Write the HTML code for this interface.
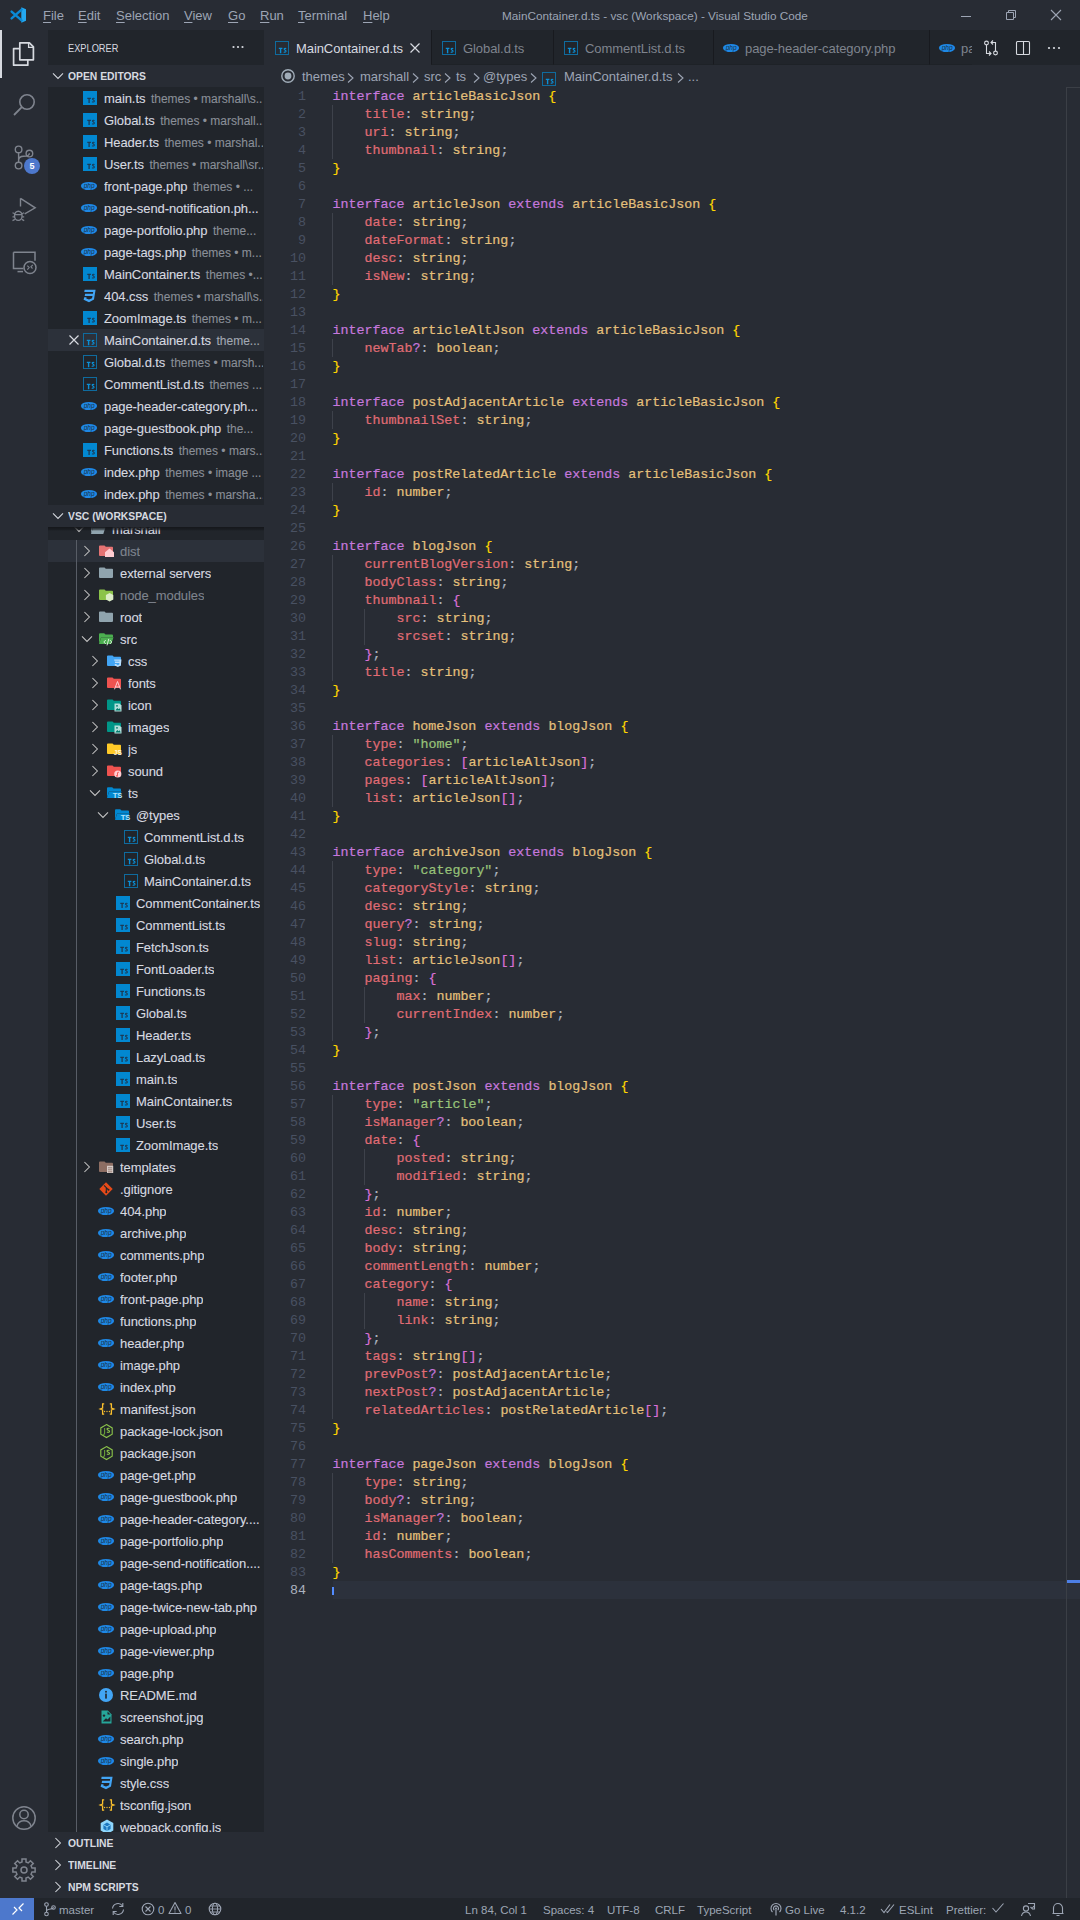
<!DOCTYPE html>
<html><head><meta charset="utf-8"><title>VS Code</title>
<style>
*{margin:0;padding:0;box-sizing:border-box}
html,body{width:1080px;height:1920px;overflow:hidden;background:#282c34}
body{position:relative;font-family:"Liberation Sans",sans-serif}
.t{position:absolute;white-space:nowrap;font-family:"Liberation Sans",sans-serif}
.ic{position:absolute;overflow:visible}
#titlebar{position:absolute;left:0;top:0;width:1080px;height:30px;background:#282c34}
.menu{font-size:13px;color:#9da5b4;line-height:16px}
.menu u{text-decoration:underline;text-underline-offset:2px}
.wtitle{font-size:11.75px;color:#9da5b4;line-height:14px}
#activity{position:absolute;left:0;top:30px;width:48px;height:1868px;background:#282c34}
#sidebar{position:absolute;left:48px;top:30px;width:216px;height:1868px;background:#21252b;overflow:hidden}
.sbtitle{font-size:11px;color:#d7dae0;line-height:13px;transform:scaleX(.84);transform-origin:0 0}
.hdr{position:absolute;left:0;width:216px;height:22px;background:#282c34}
.sechdr{font-size:11px;font-weight:bold;color:#d7dae0;line-height:13px;transform:scaleX(.94);transform-origin:0 0}
.item{font-size:13px;color:#d7dae0;line-height:16px;max-width:159px;overflow:hidden;letter-spacing:-.08px;-webkit-text-stroke:0.1px currentColor}
.item.dim{color:#7f848e}
.desc{font-size:12px;color:#8a8f98;margin-left:2px;letter-spacing:0}
.sel{position:absolute;left:0;width:216px;height:22px;background:#2c313a}
.sel2{position:absolute;left:0;width:216px;height:22px;background:#2c313a}
#tree{position:absolute;left:0;width:216px;overflow:hidden}
.sticky{position:absolute;left:0;width:216px;background:#21252b}
.shadowtop{position:absolute;left:0;top:0;width:216px;height:4px;background:linear-gradient(#15171b,rgba(21,23,27,.6) 60%,rgba(21,23,27,0))}
#editor{position:absolute;left:264px;top:30px;width:816px;height:1868px;background:#282c34;overflow:hidden}
#tabbar{position:absolute;left:0;top:0;width:816px;height:35px;background:#21252b}
.tab{position:absolute;top:0;height:35px;background:#21252b;border-left:1px solid #181a1f;border-bottom:1px solid #1e2227}
.tab.active{background:#282c34;border:none}
.tabt{font-size:13px;line-height:16px;letter-spacing:-.08px}
.bc{font-size:13px;color:#9da5b4;line-height:16px}
.bc .chev{font-size:16px}
.ln{position:absolute;left:0;margin-top:1px;width:42px;text-align:right;font-family:"Liberation Mono",monospace;font-size:13.33px;line-height:18px;color:#495162}
.ln.cur{color:#abb2bf}
.cl{position:absolute;left:68.4px;margin-top:1px;white-space:pre;font-family:"Liberation Mono",monospace;font-size:13.33px;line-height:18px;color:#abb2bf;-webkit-text-stroke:0.2px currentColor}
.guide{position:absolute;width:1px;background:#3e424b}
.k{color:#c678dd}.y{color:#e5c07b}.r{color:#e06c75}.p{color:#abb2bf}.g{color:#98c379}.b1{color:#ffd700}.b2{color:#da70d6}
#status{position:absolute;left:0;top:1898px;width:1080px;height:22px;background:#21252b}
.stt{font-size:11.5px;color:#9da5b4;line-height:14px}

.selrow .desc{color:#a3a9b3}

</style></head><body>
<div id="titlebar"><svg class="ic" style="left:10px;top:7px;width:16px;height:16px" viewBox="0 0 16 16"><path d="M11.3 0.3L16 2.2v11.6l-4.7 1.9z" fill="#24a8f0"/><path d="M1.6 4.6l10 8.8M1.6 11.4l10-8.8" stroke="#0a8ad6" stroke-width="2.4" stroke-linecap="round"/></svg><div class="t menu" style="left:43px;top:8px"><u>F</u>ile</div><div class="t menu" style="left:78px;top:8px"><u>E</u>dit</div><div class="t menu" style="left:116px;top:8px"><u>S</u>election</div><div class="t menu" style="left:184px;top:8px"><u>V</u>iew</div><div class="t menu" style="left:228px;top:8px"><u>G</u>o</div><div class="t menu" style="left:260px;top:8px"><u>R</u>un</div><div class="t menu" style="left:298px;top:8px"><u>T</u>erminal</div><div class="t menu" style="left:363px;top:8px"><u>H</u>elp</div><div class="t wtitle" style="left:502px;top:9px">MainContainer.d.ts - vsc (Workspace) - Visual Studio Code</div><svg class="ic" style="left:960px;top:10px;width:12px;height:12px" viewBox="0 0 12 12"><path d="M1 6.5h10" stroke="#9da5b4" stroke-width="1"/></svg><svg class="ic" style="left:1005px;top:9px;width:12px;height:12px" viewBox="0 0 12 12"><path d="M1.5 3.5h7v7h-7z M3.5 3.5v-2h7v7h-2" fill="none" stroke="#9da5b4" stroke-width="1"/></svg><svg class="ic" style="left:1050px;top:9px;width:12px;height:12px" viewBox="0 0 12 12"><path d="M1 1l10 10M11 1L1 11" stroke="#9da5b4" stroke-width="1.1"/></svg></div>
<div id="activity"><div style="position:absolute;left:0;top:0;width:2px;height:48px;background:#d7dae0"></div><svg class="ic" style="left:12px;top:12px;width:24px;height:24px" viewBox="0 0 24 24"><path d="M7.8 0.8h9.6l4 4v13H7.8z" fill="none" stroke="#d7dae0" stroke-width="1.7" stroke-linejoin="round"/><path d="M16.6 0.8v4.6h4.6" fill="none" stroke="#d7dae0" stroke-width="1.3"/><path d="M7.8 6.6H1.6v16.6h14.2v-5.4" fill="none" stroke="#d7dae0" stroke-width="1.7" stroke-linejoin="round"/></svg><svg class="ic" style="left:12px;top:63px;width:24px;height:24px" viewBox="0 0 24 24"><circle cx="15" cy="9" r="7.2" fill="none" stroke="#7f848e" stroke-width="1.6"/><path d="M9.8 14.2L2 22" stroke="#7f848e" stroke-width="1.8"/></svg><svg class="ic" style="left:12px;top:111px;width:24px;height:30px" viewBox="0 0 24 30"><circle cx="6.6" cy="8.4" r="3.3" fill="none" stroke="#7f848e" stroke-width="1.4"/><circle cx="17.4" cy="12.6" r="3.3" fill="none" stroke="#7f848e" stroke-width="1.4"/><circle cx="6.6" cy="24.6" r="3.3" fill="none" stroke="#7f848e" stroke-width="1.4"/><path d="M6.6 11.7v9.6M6.6 19.6c0-3 2-4.3 5-4.3 3 0 5.8-.4 5.8-3" fill="none" stroke="#7f848e" stroke-width="1.4"/></svg><div style="position:absolute;left:24px;top:128px;width:16px;height:16px;border-radius:8px;background:#4d78cc;color:#fff;font:bold 9px/16px 'Liberation Sans',sans-serif;text-align:center">5</div><svg class="ic" style="left:11px;top:166px;width:26px;height:26px" viewBox="0 0 26 26"><path d="M9.5 2.3v8.2M9.5 2.3L24.2 11.8l-10.5 6" fill="none" stroke="#7f848e" stroke-width="1.4"/><ellipse cx="7.3" cy="19.8" rx="3.8" ry="4.6" fill="none" stroke="#7f848e" stroke-width="1.4"/><path d="M1.5 16.7l2.4 1M1.5 20.8h2M1.5 24.6l2.4-1.2M13.2 16.7l-2.4 1M13.2 20.8h-2M13.2 24.6l-2.4-1.2M3.5 18.7h7.6" fill="none" stroke="#7f848e" stroke-width="1.2"/></svg><svg class="ic" style="left:12px;top:218px;width:26px;height:26px" viewBox="0 0 26 26"><path d="M1.5 4.2h21.5v8.5M11.5 20.5H1.5V4.2" fill="none" stroke="#7f848e" stroke-width="1.5"/><path d="M5.5 23.6h5.5" stroke="#7f848e" stroke-width="1.5"/><circle cx="18" cy="19.5" r="6" fill="none" stroke="#7f848e" stroke-width="1.5"/><path d="M15.3 17.6l1.9 1.9-1.9 2.1M20.8 16.9l-1.9 1.9 1.6 1.7" fill="none" stroke="#7f848e" stroke-width="1.1"/></svg><svg class="ic" style="left:12px;top:1776px;width:24px;height:24px" viewBox="0 0 24 24"><circle cx="12" cy="12" r="11.2" fill="none" stroke="#7f848e" stroke-width="1.5"/><circle cx="12" cy="8.5" r="4.2" fill="none" stroke="#7f848e" stroke-width="1.5"/><path d="M5 20c1-3.5 3.5-5.2 7-5.2s6 1.7 7 5.2" fill="none" stroke="#7f848e" stroke-width="1.5"/></svg><svg class="ic" style="left:12px;top:1828px;width:24px;height:24px" viewBox="0 0 24 24"><polygon points="10.00,4.05 10.00,0.88 14.00,0.88 14.00,4.05 16.21,4.96 18.45,2.72 21.28,5.55 19.04,7.79 19.95,10.00 23.12,10.00 23.12,14.00 19.95,14.00 19.04,16.21 21.28,18.45 18.45,21.28 16.21,19.04 14.00,19.95 14.00,23.12 10.00,23.12 10.00,19.95 7.79,19.04 5.55,21.28 2.72,18.45 4.96,16.21 4.05,14.00 0.88,14.00 0.88,10.00 4.05,10.00 4.96,7.79 2.72,5.55 5.55,2.72 7.79,4.96" fill="none" stroke="#7f848e" stroke-width="1.5" stroke-linejoin="miter"/><circle cx="12" cy="12" r="3" fill="none" stroke="#7f848e" stroke-width="1.5"/></svg></div>
<div id="sidebar"><div class="t sbtitle" style="left:20px;top:12px">EXPLORER</div><svg class="ic" style="left:182px;top:9px;width:16px;height:16px" viewBox="0 0 16 16"><circle cx="3.5" cy="8" r="1.1" fill="#d7dae0"/><circle cx="8" cy="8" r="1.1" fill="#d7dae0"/><circle cx="12.5" cy="8" r="1.1" fill="#d7dae0"/></svg><div class="hdr" style="top:35px"></div><svg class="ic" style="left:4px;top:42px;width:12px;height:8px" viewBox="0 0 12 8"><path d="M1 1.4l5 5 5-5" fill="none" stroke="#d7dae0" stroke-width="1.05"/></svg><div class="t sechdr" style="left:20px;top:40px">OPEN EDITORS</div><svg class="ic" style="left:35px;top:61px;width:14px;height:14px" viewBox="0 0 14 14"><rect x="0" y="0" width="14" height="14" fill="#0288d1"/><path d="M4.3 7.3h3.6M6.1 7.3v4.8" stroke="#1c3a55" stroke-width="1.3" fill="none"/><path d="M11.5 7.6c-.4-.4-1.6-.6-2 .1-.5.9 2.1 1.3 1.8 2.6-.3 1-1.7.9-2.2.4" stroke="#1c3a55" stroke-width="1.1" fill="none"/></svg><div class="t item" style="left:56px;top:61px">main.ts <span class="desc">themes • marshall\s...</span></div><svg class="ic" style="left:35px;top:83px;width:14px;height:14px" viewBox="0 0 14 14"><rect x="0" y="0" width="14" height="14" fill="#0288d1"/><path d="M4.3 7.3h3.6M6.1 7.3v4.8" stroke="#1c3a55" stroke-width="1.3" fill="none"/><path d="M11.5 7.6c-.4-.4-1.6-.6-2 .1-.5.9 2.1 1.3 1.8 2.6-.3 1-1.7.9-2.2.4" stroke="#1c3a55" stroke-width="1.1" fill="none"/></svg><div class="t item" style="left:56px;top:83px">Global.ts <span class="desc">themes • marshall...</span></div><svg class="ic" style="left:35px;top:105px;width:14px;height:14px" viewBox="0 0 14 14"><rect x="0" y="0" width="14" height="14" fill="#0288d1"/><path d="M4.3 7.3h3.6M6.1 7.3v4.8" stroke="#1c3a55" stroke-width="1.3" fill="none"/><path d="M11.5 7.6c-.4-.4-1.6-.6-2 .1-.5.9 2.1 1.3 1.8 2.6-.3 1-1.7.9-2.2.4" stroke="#1c3a55" stroke-width="1.1" fill="none"/></svg><div class="t item" style="left:56px;top:105px">Header.ts <span class="desc">themes • marshal...</span></div><svg class="ic" style="left:35px;top:127px;width:14px;height:14px" viewBox="0 0 14 14"><rect x="0" y="0" width="14" height="14" fill="#0288d1"/><path d="M4.3 7.3h3.6M6.1 7.3v4.8" stroke="#1c3a55" stroke-width="1.3" fill="none"/><path d="M11.5 7.6c-.4-.4-1.6-.6-2 .1-.5.9 2.1 1.3 1.8 2.6-.3 1-1.7.9-2.2.4" stroke="#1c3a55" stroke-width="1.1" fill="none"/></svg><div class="t item" style="left:56px;top:127px">User.ts <span class="desc">themes • marshall\sr...</span></div><svg class="ic" style="left:33px;top:151px;width:16px;height:10px" viewBox="0 0 16 10"><ellipse cx="8" cy="5" rx="8.1" ry="4.1" fill="#1e88e5"/><text x="8.2" y="7" font-family="Liberation Sans" font-style="italic" font-size="6.6" fill="#1a2f45" text-anchor="middle">php</text></svg><div class="t item" style="left:56px;top:149px">front-page.php <span class="desc">themes • ...</span></div><svg class="ic" style="left:33px;top:173px;width:16px;height:10px" viewBox="0 0 16 10"><ellipse cx="8" cy="5" rx="8.1" ry="4.1" fill="#1e88e5"/><text x="8.2" y="7" font-family="Liberation Sans" font-style="italic" font-size="6.6" fill="#1a2f45" text-anchor="middle">php</text></svg><div class="t item" style="left:56px;top:171px">page-send-notification.ph...</div><svg class="ic" style="left:33px;top:195px;width:16px;height:10px" viewBox="0 0 16 10"><ellipse cx="8" cy="5" rx="8.1" ry="4.1" fill="#1e88e5"/><text x="8.2" y="7" font-family="Liberation Sans" font-style="italic" font-size="6.6" fill="#1a2f45" text-anchor="middle">php</text></svg><div class="t item" style="left:56px;top:193px">page-portfolio.php <span class="desc">theme...</span></div><svg class="ic" style="left:33px;top:217px;width:16px;height:10px" viewBox="0 0 16 10"><ellipse cx="8" cy="5" rx="8.1" ry="4.1" fill="#1e88e5"/><text x="8.2" y="7" font-family="Liberation Sans" font-style="italic" font-size="6.6" fill="#1a2f45" text-anchor="middle">php</text></svg><div class="t item" style="left:56px;top:215px">page-tags.php <span class="desc">themes • m...</span></div><svg class="ic" style="left:35px;top:237px;width:14px;height:14px" viewBox="0 0 14 14"><rect x="0" y="0" width="14" height="14" fill="#0288d1"/><path d="M4.3 7.3h3.6M6.1 7.3v4.8" stroke="#1c3a55" stroke-width="1.3" fill="none"/><path d="M11.5 7.6c-.4-.4-1.6-.6-2 .1-.5.9 2.1 1.3 1.8 2.6-.3 1-1.7.9-2.2.4" stroke="#1c3a55" stroke-width="1.1" fill="none"/></svg><div class="t item" style="left:56px;top:237px">MainContainer.ts <span class="desc">themes •...</span></div><svg class="ic" style="left:34px;top:259px;width:14px;height:14px" viewBox="0 0 14 14"><path d="M2.6 0.8h11l-1.6 9.8L7 13.2 1.6 10.7 2.2 8.2h2.3l-.2 1.2L7 10.6l3-1.3.5-2.4H2.7l.4-2.2h7.8l.3-1.7H2.3z" fill="#42a5f5"/></svg><div class="t item" style="left:56px;top:259px">404.css <span class="desc">themes • marshall\s...</span></div><svg class="ic" style="left:35px;top:281px;width:14px;height:14px" viewBox="0 0 14 14"><rect x="0" y="0" width="14" height="14" fill="#0288d1"/><path d="M4.3 7.3h3.6M6.1 7.3v4.8" stroke="#1c3a55" stroke-width="1.3" fill="none"/><path d="M11.5 7.6c-.4-.4-1.6-.6-2 .1-.5.9 2.1 1.3 1.8 2.6-.3 1-1.7.9-2.2.4" stroke="#1c3a55" stroke-width="1.1" fill="none"/></svg><div class="t item" style="left:56px;top:281px">ZoomImage.ts <span class="desc">themes • m...</span></div><div class="sel" style="top:299px"></div><svg class="ic" style="left:21px;top:305px;width:10px;height:10px" viewBox="0 0 10 10"><path d="M0.5 0.5l9 9M9.5 0.5l-9 9" stroke="#d7dae0" stroke-width="1.2"/></svg><svg class="ic" style="left:35px;top:303px;width:14px;height:14px" viewBox="0 0 14 14"><rect x="0.5" y="0.5" width="13" height="13" fill="none" stroke="#0f6b9e" stroke-width="1"/><path d="M3.8 7.4h3.6M5.6 7.4v4.8" stroke="#0b8fd6" stroke-width="1.4" fill="none"/><path d="M11.2 7.7c-.4-.4-1.6-.6-2 .1-.5.9 2.1 1.3 1.8 2.6-.3 1-1.7.9-2.2.4" stroke="#0b8fd6" stroke-width="1.2" fill="none"/></svg><div class="t item selrow" style="left:56px;top:303px">MainContainer.d.ts <span class="desc">theme...</span></div><svg class="ic" style="left:35px;top:325px;width:14px;height:14px" viewBox="0 0 14 14"><rect x="0.5" y="0.5" width="13" height="13" fill="none" stroke="#0f6b9e" stroke-width="1"/><path d="M3.8 7.4h3.6M5.6 7.4v4.8" stroke="#0b8fd6" stroke-width="1.4" fill="none"/><path d="M11.2 7.7c-.4-.4-1.6-.6-2 .1-.5.9 2.1 1.3 1.8 2.6-.3 1-1.7.9-2.2.4" stroke="#0b8fd6" stroke-width="1.2" fill="none"/></svg><div class="t item" style="left:56px;top:325px">Global.d.ts <span class="desc">themes • marsh...</span></div><svg class="ic" style="left:35px;top:347px;width:14px;height:14px" viewBox="0 0 14 14"><rect x="0.5" y="0.5" width="13" height="13" fill="none" stroke="#0f6b9e" stroke-width="1"/><path d="M3.8 7.4h3.6M5.6 7.4v4.8" stroke="#0b8fd6" stroke-width="1.4" fill="none"/><path d="M11.2 7.7c-.4-.4-1.6-.6-2 .1-.5.9 2.1 1.3 1.8 2.6-.3 1-1.7.9-2.2.4" stroke="#0b8fd6" stroke-width="1.2" fill="none"/></svg><div class="t item" style="left:56px;top:347px">CommentList.d.ts <span class="desc">themes ...</span></div><svg class="ic" style="left:33px;top:371px;width:16px;height:10px" viewBox="0 0 16 10"><ellipse cx="8" cy="5" rx="8.1" ry="4.1" fill="#1e88e5"/><text x="8.2" y="7" font-family="Liberation Sans" font-style="italic" font-size="6.6" fill="#1a2f45" text-anchor="middle">php</text></svg><div class="t item" style="left:56px;top:369px">page-header-category.ph...</div><svg class="ic" style="left:33px;top:393px;width:16px;height:10px" viewBox="0 0 16 10"><ellipse cx="8" cy="5" rx="8.1" ry="4.1" fill="#1e88e5"/><text x="8.2" y="7" font-family="Liberation Sans" font-style="italic" font-size="6.6" fill="#1a2f45" text-anchor="middle">php</text></svg><div class="t item" style="left:56px;top:391px">page-guestbook.php <span class="desc">the...</span></div><svg class="ic" style="left:35px;top:413px;width:14px;height:14px" viewBox="0 0 14 14"><rect x="0" y="0" width="14" height="14" fill="#0288d1"/><path d="M4.3 7.3h3.6M6.1 7.3v4.8" stroke="#1c3a55" stroke-width="1.3" fill="none"/><path d="M11.5 7.6c-.4-.4-1.6-.6-2 .1-.5.9 2.1 1.3 1.8 2.6-.3 1-1.7.9-2.2.4" stroke="#1c3a55" stroke-width="1.1" fill="none"/></svg><div class="t item" style="left:56px;top:413px">Functions.ts <span class="desc">themes • mars...</span></div><svg class="ic" style="left:33px;top:437px;width:16px;height:10px" viewBox="0 0 16 10"><ellipse cx="8" cy="5" rx="8.1" ry="4.1" fill="#1e88e5"/><text x="8.2" y="7" font-family="Liberation Sans" font-style="italic" font-size="6.6" fill="#1a2f45" text-anchor="middle">php</text></svg><div class="t item" style="left:56px;top:435px">index.php <span class="desc">themes • image ...</span></div><svg class="ic" style="left:33px;top:459px;width:16px;height:10px" viewBox="0 0 16 10"><ellipse cx="8" cy="5" rx="8.1" ry="4.1" fill="#1e88e5"/><text x="8.2" y="7" font-family="Liberation Sans" font-style="italic" font-size="6.6" fill="#1a2f45" text-anchor="middle">php</text></svg><div class="t item" style="left:56px;top:457px">index.php <span class="desc">themes • marsha...</span></div><div id="tree" style="top:497px;height:1305px"><div class="sel2" style="top:13px"></div><svg class="ic" style="left:35px;top:18px;width:8px;height:12px" viewBox="0 0 8 12"><path d="M1.4 1l5 5-5 5" fill="none" stroke="#c5c5c5" stroke-width="1.05"/></svg><svg class="ic" style="left:51px;top:18px;width:16px;height:14px" viewBox="0 0 16 14"><path d="M0 1.3C0 .8.4.4.9.4h4.6l1.3 1.3h6.3c.5 0 .9.4.9.9v7.5c0 .5-.4.9-.9.9H.9c-.5 0-.9-.4-.9-.9z" fill="#e57373"/><path d="M6 7.2l4.5-3.8L15 7.2V12H6z" fill="#ffcdd2"/></svg><div class="t item dim" style="left:72px;top:17px">dist</div><svg class="ic" style="left:35px;top:40px;width:8px;height:12px" viewBox="0 0 8 12"><path d="M1.4 1l5 5-5 5" fill="none" stroke="#c5c5c5" stroke-width="1.05"/></svg><svg class="ic" style="left:51px;top:40px;width:16px;height:14px" viewBox="0 0 16 14"><path d="M0 1.3C0 .8.4.4.9.4h4.6l1.3 1.3h6.3c.5 0 .9.4.9.9v7.5c0 .5-.4.9-.9.9H.9c-.5 0-.9-.4-.9-.9z" fill="#90a4ae"/></svg><div class="t item" style="left:72px;top:39px">external servers</div><svg class="ic" style="left:35px;top:62px;width:8px;height:12px" viewBox="0 0 8 12"><path d="M1.4 1l5 5-5 5" fill="none" stroke="#c5c5c5" stroke-width="1.05"/></svg><svg class="ic" style="left:51px;top:62px;width:16px;height:14px" viewBox="0 0 16 14"><path d="M0 1.3C0 .8.4.4.9.4h4.6l1.3 1.3h6.3c.5 0 .9.4.9.9v7.5c0 .5-.4.9-.9.9H.9c-.5 0-.9-.4-.9-.9z" fill="#8bc34a"/><path d="M10.6 4l3.7 2.1v4.4l-3.7 2.1-3.7-2.1V6.1z" fill="#dcedc8"/></svg><div class="t item dim" style="left:72px;top:61px">node_modules</div><svg class="ic" style="left:35px;top:84px;width:8px;height:12px" viewBox="0 0 8 12"><path d="M1.4 1l5 5-5 5" fill="none" stroke="#c5c5c5" stroke-width="1.05"/></svg><svg class="ic" style="left:51px;top:84px;width:16px;height:14px" viewBox="0 0 16 14"><path d="M0 1.3C0 .8.4.4.9.4h4.6l1.3 1.3h6.3c.5 0 .9.4.9.9v7.5c0 .5-.4.9-.9.9H.9c-.5 0-.9-.4-.9-.9z" fill="#90a4ae"/></svg><div class="t item" style="left:72px;top:83px">root</div><svg class="ic" style="left:33px;top:108px;width:12px;height:8px" viewBox="0 0 12 8"><path d="M1 1.4l5 5 5-5" fill="none" stroke="#c5c5c5" stroke-width="1.05"/></svg><svg class="ic" style="left:51px;top:106px;width:16px;height:14px" viewBox="0 0 16 14"><path d="M0 1.2C0 .7.4.3.9.3h4.3l1.3 1.3h6.6c.5 0 .9.4.9.9V4H2.2L0 10.8z" fill="#4caf50"/><path d="M2.2 4.3H14.5L12.3 11H0z" fill="#4caf50"/><path d="M6.8 7l-2 2 2 2M10.8 7l2 2-2 2M9.8 5.8l-1.8 6.6" stroke="#e8f5e9" stroke-width="0.9" fill="none"/></svg><div class="t item" style="left:72px;top:105px">src</div><svg class="ic" style="left:43px;top:128px;width:8px;height:12px" viewBox="0 0 8 12"><path d="M1.4 1l5 5-5 5" fill="none" stroke="#c5c5c5" stroke-width="1.05"/></svg><svg class="ic" style="left:59px;top:128px;width:16px;height:14px" viewBox="0 0 16 14"><path d="M0 1.3C0 .8.4.4.9.4h4.6l1.3 1.3h6.3c.5 0 .9.4.9.9v7.5c0 .5-.4.9-.9.9H.9c-.5 0-.9-.4-.9-.9z" fill="#42a5f5"/><path d="M7.2 4.6h7.3l-.7 6-3 1.4-3-1.4-.1-1.6h1.8v.6l1.3.6 1.4-.6.2-1.6H8l-.2-1.5h4.6l.1-.8H7.3z" fill="#bbdefb"/></svg><div class="t item" style="left:80px;top:127px">css</div><svg class="ic" style="left:43px;top:150px;width:8px;height:12px" viewBox="0 0 8 12"><path d="M1.4 1l5 5-5 5" fill="none" stroke="#c5c5c5" stroke-width="1.05"/></svg><svg class="ic" style="left:59px;top:150px;width:16px;height:14px" viewBox="0 0 16 14"><path d="M0 1.3C0 .8.4.4.9.4h4.6l1.3 1.3h6.3c.5 0 .9.4.9.9v7.5c0 .5-.4.9-.9.9H.9c-.5 0-.9-.4-.9-.9z" fill="#ef5350"/><path d="M7.5 12.3l3-7.8 3 7.8M8.6 10h3.8" stroke="#ffcdd2" stroke-width="1" fill="none"/></svg><div class="t item" style="left:80px;top:149px">fonts</div><svg class="ic" style="left:43px;top:172px;width:8px;height:12px" viewBox="0 0 8 12"><path d="M1.4 1l5 5-5 5" fill="none" stroke="#c5c5c5" stroke-width="1.05"/></svg><svg class="ic" style="left:59px;top:172px;width:16px;height:14px" viewBox="0 0 16 14"><path d="M0 1.3C0 .8.4.4.9.4h4.6l1.3 1.3h6.3c.5 0 .9.4.9.9v7.5c0 .5-.4.9-.9.9H.9c-.5 0-.9-.4-.9-.9z" fill="#009688"/><path d="M7.5 4.5h5l2 2v6h-7z" fill="#b2dfdb"/><path d="M8.3 11.5l2-2.5 1.3 1.3 1-1 1.2 2.2z" fill="#00796b"/><circle cx="10" cy="6.8" r=".9" fill="#00796b"/></svg><div class="t item" style="left:80px;top:171px">icon</div><svg class="ic" style="left:43px;top:194px;width:8px;height:12px" viewBox="0 0 8 12"><path d="M1.4 1l5 5-5 5" fill="none" stroke="#c5c5c5" stroke-width="1.05"/></svg><svg class="ic" style="left:59px;top:194px;width:16px;height:14px" viewBox="0 0 16 14"><path d="M0 1.3C0 .8.4.4.9.4h4.6l1.3 1.3h6.3c.5 0 .9.4.9.9v7.5c0 .5-.4.9-.9.9H.9c-.5 0-.9-.4-.9-.9z" fill="#009688"/><path d="M7.5 4.5h5l2 2v6h-7z" fill="#b2dfdb"/><path d="M8.3 11.5l2-2.5 1.3 1.3 1-1 1.2 2.2z" fill="#00796b"/><circle cx="10" cy="6.8" r=".9" fill="#00796b"/></svg><div class="t item" style="left:80px;top:193px">images</div><svg class="ic" style="left:43px;top:216px;width:8px;height:12px" viewBox="0 0 8 12"><path d="M1.4 1l5 5-5 5" fill="none" stroke="#c5c5c5" stroke-width="1.05"/></svg><svg class="ic" style="left:59px;top:216px;width:16px;height:14px" viewBox="0 0 16 14"><path d="M0 1.3C0 .8.4.4.9.4h4.6l1.3 1.3h6.3c.5 0 .9.4.9.9v7.5c0 .5-.4.9-.9.9H.9c-.5 0-.9-.4-.9-.9z" fill="#ffca28"/><text x="10.8" y="12.2" font-family="Liberation Sans" font-size="6.5" font-weight="bold" fill="#fff8e1" text-anchor="middle">JS</text></svg><div class="t item" style="left:80px;top:215px">js</div><svg class="ic" style="left:43px;top:238px;width:8px;height:12px" viewBox="0 0 8 12"><path d="M1.4 1l5 5-5 5" fill="none" stroke="#c5c5c5" stroke-width="1.05"/></svg><svg class="ic" style="left:59px;top:238px;width:16px;height:14px" viewBox="0 0 16 14"><path d="M0 1.3C0 .8.4.4.9.4h4.6l1.3 1.3h6.3c.5 0 .9.4.9.9v7.5c0 .5-.4.9-.9.9H.9c-.5 0-.9-.4-.9-.9z" fill="#ef5350"/><circle cx="10.8" cy="9" r="3.6" fill="#ffcdd2"/><path d="M10.5 10.8V7.6l1.4-.4" stroke="#ef5350" stroke-width="0.9" fill="none"/><circle cx="10" cy="10.8" r=".9" fill="#ef5350"/></svg><div class="t item" style="left:80px;top:237px">sound</div><svg class="ic" style="left:41px;top:262px;width:12px;height:8px" viewBox="0 0 12 8"><path d="M1 1.4l5 5 5-5" fill="none" stroke="#c5c5c5" stroke-width="1.05"/></svg><svg class="ic" style="left:59px;top:260px;width:16px;height:14px" viewBox="0 0 16 14"><path d="M0 1.2C0 .7.4.3.9.3h4.3l1.3 1.3h6.6c.5 0 .9.4.9.9V4H2.2L0 10.8z" fill="#0288d1"/><path d="M2.2 4.3H14.5L12.3 11H0z" fill="#0288d1"/><text x="10.6" y="11.2" font-family="Liberation Sans" font-size="7.6" font-weight="bold" fill="#b3e5fc" text-anchor="middle">TS</text></svg><div class="t item" style="left:80px;top:259px">ts</div><svg class="ic" style="left:49px;top:284px;width:12px;height:8px" viewBox="0 0 12 8"><path d="M1 1.4l5 5 5-5" fill="none" stroke="#c5c5c5" stroke-width="1.05"/></svg><svg class="ic" style="left:67px;top:282px;width:16px;height:14px" viewBox="0 0 16 14"><path d="M0 1.2C0 .7.4.3.9.3h4.3l1.3 1.3h6.6c.5 0 .9.4.9.9V4H2.2L0 10.8z" fill="#0288d1"/><path d="M2.2 4.3H14.5L12.3 11H0z" fill="#0288d1"/><text x="10.6" y="11.2" font-family="Liberation Sans" font-size="7.6" font-weight="bold" fill="#b3e5fc" text-anchor="middle">TS</text></svg><div class="t item" style="left:88px;top:281px">@types</div><svg class="ic" style="left:76px;top:303px;width:14px;height:14px" viewBox="0 0 14 14"><rect x="0.5" y="0.5" width="13" height="13" fill="none" stroke="#0f6b9e" stroke-width="1"/><path d="M3.8 7.4h3.6M5.6 7.4v4.8" stroke="#0b8fd6" stroke-width="1.4" fill="none"/><path d="M11.2 7.7c-.4-.4-1.6-.6-2 .1-.5.9 2.1 1.3 1.8 2.6-.3 1-1.7.9-2.2.4" stroke="#0b8fd6" stroke-width="1.2" fill="none"/></svg><div class="t item" style="left:96px;top:303px">CommentList.d.ts</div><svg class="ic" style="left:76px;top:325px;width:14px;height:14px" viewBox="0 0 14 14"><rect x="0.5" y="0.5" width="13" height="13" fill="none" stroke="#0f6b9e" stroke-width="1"/><path d="M3.8 7.4h3.6M5.6 7.4v4.8" stroke="#0b8fd6" stroke-width="1.4" fill="none"/><path d="M11.2 7.7c-.4-.4-1.6-.6-2 .1-.5.9 2.1 1.3 1.8 2.6-.3 1-1.7.9-2.2.4" stroke="#0b8fd6" stroke-width="1.2" fill="none"/></svg><div class="t item" style="left:96px;top:325px">Global.d.ts</div><svg class="ic" style="left:76px;top:347px;width:14px;height:14px" viewBox="0 0 14 14"><rect x="0.5" y="0.5" width="13" height="13" fill="none" stroke="#0f6b9e" stroke-width="1"/><path d="M3.8 7.4h3.6M5.6 7.4v4.8" stroke="#0b8fd6" stroke-width="1.4" fill="none"/><path d="M11.2 7.7c-.4-.4-1.6-.6-2 .1-.5.9 2.1 1.3 1.8 2.6-.3 1-1.7.9-2.2.4" stroke="#0b8fd6" stroke-width="1.2" fill="none"/></svg><div class="t item" style="left:96px;top:347px">MainContainer.d.ts</div><svg class="ic" style="left:68px;top:369px;width:14px;height:14px" viewBox="0 0 14 14"><rect x="0" y="0" width="14" height="14" fill="#0288d1"/><path d="M4.3 7.3h3.6M6.1 7.3v4.8" stroke="#1c3a55" stroke-width="1.3" fill="none"/><path d="M11.5 7.6c-.4-.4-1.6-.6-2 .1-.5.9 2.1 1.3 1.8 2.6-.3 1-1.7.9-2.2.4" stroke="#1c3a55" stroke-width="1.1" fill="none"/></svg><div class="t item" style="left:88px;top:369px">CommentContainer.ts</div><svg class="ic" style="left:68px;top:391px;width:14px;height:14px" viewBox="0 0 14 14"><rect x="0" y="0" width="14" height="14" fill="#0288d1"/><path d="M4.3 7.3h3.6M6.1 7.3v4.8" stroke="#1c3a55" stroke-width="1.3" fill="none"/><path d="M11.5 7.6c-.4-.4-1.6-.6-2 .1-.5.9 2.1 1.3 1.8 2.6-.3 1-1.7.9-2.2.4" stroke="#1c3a55" stroke-width="1.1" fill="none"/></svg><div class="t item" style="left:88px;top:391px">CommentList.ts</div><svg class="ic" style="left:68px;top:413px;width:14px;height:14px" viewBox="0 0 14 14"><rect x="0" y="0" width="14" height="14" fill="#0288d1"/><path d="M4.3 7.3h3.6M6.1 7.3v4.8" stroke="#1c3a55" stroke-width="1.3" fill="none"/><path d="M11.5 7.6c-.4-.4-1.6-.6-2 .1-.5.9 2.1 1.3 1.8 2.6-.3 1-1.7.9-2.2.4" stroke="#1c3a55" stroke-width="1.1" fill="none"/></svg><div class="t item" style="left:88px;top:413px">FetchJson.ts</div><svg class="ic" style="left:68px;top:435px;width:14px;height:14px" viewBox="0 0 14 14"><rect x="0" y="0" width="14" height="14" fill="#0288d1"/><path d="M4.3 7.3h3.6M6.1 7.3v4.8" stroke="#1c3a55" stroke-width="1.3" fill="none"/><path d="M11.5 7.6c-.4-.4-1.6-.6-2 .1-.5.9 2.1 1.3 1.8 2.6-.3 1-1.7.9-2.2.4" stroke="#1c3a55" stroke-width="1.1" fill="none"/></svg><div class="t item" style="left:88px;top:435px">FontLoader.ts</div><svg class="ic" style="left:68px;top:457px;width:14px;height:14px" viewBox="0 0 14 14"><rect x="0" y="0" width="14" height="14" fill="#0288d1"/><path d="M4.3 7.3h3.6M6.1 7.3v4.8" stroke="#1c3a55" stroke-width="1.3" fill="none"/><path d="M11.5 7.6c-.4-.4-1.6-.6-2 .1-.5.9 2.1 1.3 1.8 2.6-.3 1-1.7.9-2.2.4" stroke="#1c3a55" stroke-width="1.1" fill="none"/></svg><div class="t item" style="left:88px;top:457px">Functions.ts</div><svg class="ic" style="left:68px;top:479px;width:14px;height:14px" viewBox="0 0 14 14"><rect x="0" y="0" width="14" height="14" fill="#0288d1"/><path d="M4.3 7.3h3.6M6.1 7.3v4.8" stroke="#1c3a55" stroke-width="1.3" fill="none"/><path d="M11.5 7.6c-.4-.4-1.6-.6-2 .1-.5.9 2.1 1.3 1.8 2.6-.3 1-1.7.9-2.2.4" stroke="#1c3a55" stroke-width="1.1" fill="none"/></svg><div class="t item" style="left:88px;top:479px">Global.ts</div><svg class="ic" style="left:68px;top:501px;width:14px;height:14px" viewBox="0 0 14 14"><rect x="0" y="0" width="14" height="14" fill="#0288d1"/><path d="M4.3 7.3h3.6M6.1 7.3v4.8" stroke="#1c3a55" stroke-width="1.3" fill="none"/><path d="M11.5 7.6c-.4-.4-1.6-.6-2 .1-.5.9 2.1 1.3 1.8 2.6-.3 1-1.7.9-2.2.4" stroke="#1c3a55" stroke-width="1.1" fill="none"/></svg><div class="t item" style="left:88px;top:501px">Header.ts</div><svg class="ic" style="left:68px;top:523px;width:14px;height:14px" viewBox="0 0 14 14"><rect x="0" y="0" width="14" height="14" fill="#0288d1"/><path d="M4.3 7.3h3.6M6.1 7.3v4.8" stroke="#1c3a55" stroke-width="1.3" fill="none"/><path d="M11.5 7.6c-.4-.4-1.6-.6-2 .1-.5.9 2.1 1.3 1.8 2.6-.3 1-1.7.9-2.2.4" stroke="#1c3a55" stroke-width="1.1" fill="none"/></svg><div class="t item" style="left:88px;top:523px">LazyLoad.ts</div><svg class="ic" style="left:68px;top:545px;width:14px;height:14px" viewBox="0 0 14 14"><rect x="0" y="0" width="14" height="14" fill="#0288d1"/><path d="M4.3 7.3h3.6M6.1 7.3v4.8" stroke="#1c3a55" stroke-width="1.3" fill="none"/><path d="M11.5 7.6c-.4-.4-1.6-.6-2 .1-.5.9 2.1 1.3 1.8 2.6-.3 1-1.7.9-2.2.4" stroke="#1c3a55" stroke-width="1.1" fill="none"/></svg><div class="t item" style="left:88px;top:545px">main.ts</div><svg class="ic" style="left:68px;top:567px;width:14px;height:14px" viewBox="0 0 14 14"><rect x="0" y="0" width="14" height="14" fill="#0288d1"/><path d="M4.3 7.3h3.6M6.1 7.3v4.8" stroke="#1c3a55" stroke-width="1.3" fill="none"/><path d="M11.5 7.6c-.4-.4-1.6-.6-2 .1-.5.9 2.1 1.3 1.8 2.6-.3 1-1.7.9-2.2.4" stroke="#1c3a55" stroke-width="1.1" fill="none"/></svg><div class="t item" style="left:88px;top:567px">MainContainer.ts</div><svg class="ic" style="left:68px;top:589px;width:14px;height:14px" viewBox="0 0 14 14"><rect x="0" y="0" width="14" height="14" fill="#0288d1"/><path d="M4.3 7.3h3.6M6.1 7.3v4.8" stroke="#1c3a55" stroke-width="1.3" fill="none"/><path d="M11.5 7.6c-.4-.4-1.6-.6-2 .1-.5.9 2.1 1.3 1.8 2.6-.3 1-1.7.9-2.2.4" stroke="#1c3a55" stroke-width="1.1" fill="none"/></svg><div class="t item" style="left:88px;top:589px">User.ts</div><svg class="ic" style="left:68px;top:611px;width:14px;height:14px" viewBox="0 0 14 14"><rect x="0" y="0" width="14" height="14" fill="#0288d1"/><path d="M4.3 7.3h3.6M6.1 7.3v4.8" stroke="#1c3a55" stroke-width="1.3" fill="none"/><path d="M11.5 7.6c-.4-.4-1.6-.6-2 .1-.5.9 2.1 1.3 1.8 2.6-.3 1-1.7.9-2.2.4" stroke="#1c3a55" stroke-width="1.1" fill="none"/></svg><div class="t item" style="left:88px;top:611px">ZoomImage.ts</div><svg class="ic" style="left:35px;top:634px;width:8px;height:12px" viewBox="0 0 8 12"><path d="M1.4 1l5 5-5 5" fill="none" stroke="#c5c5c5" stroke-width="1.05"/></svg><svg class="ic" style="left:51px;top:634px;width:16px;height:14px" viewBox="0 0 16 14"><path d="M0 1.3C0 .8.4.4.9.4h4.6l1.3 1.3h6.3c.5 0 .9.4.9.9v7.5c0 .5-.4.9-.9.9H.9c-.5 0-.9-.4-.9-.9z" fill="#8d6e63"/><rect x="8" y="4.8" width="6.2" height="7.2" fill="#d7ccc8"/><path d="M9 6.8h4.2M9 8.8h4.2M9 10.8h4.2" stroke="#8d6e63" stroke-width="0.8"/></svg><div class="t item" style="left:72px;top:633px">templates</div><svg class="ic" style="left:51px;top:655px;width:14px;height:14px" viewBox="0 0 14 14"><path d="M7 0.3L13.7 7 7 13.7 0.3 7z" fill="#e64a19"/><path d="M5 3.3l2.3 2.3M7.3 5.6v4.6M7.3 5.6l2.2 2.2" stroke="#21252b" stroke-width="1.1" fill="none"/><circle cx="7.3" cy="10.2" r="1" fill="#21252b"/><circle cx="9.5" cy="7.8" r="1" fill="#21252b"/></svg><div class="t item" style="left:72px;top:655px">.gitignore</div><svg class="ic" style="left:50px;top:679px;width:16px;height:10px" viewBox="0 0 16 10"><ellipse cx="8" cy="5" rx="8.1" ry="4.1" fill="#1e88e5"/><text x="8.2" y="7" font-family="Liberation Sans" font-style="italic" font-size="6.6" fill="#1a2f45" text-anchor="middle">php</text></svg><div class="t item" style="left:72px;top:677px">404.php</div><svg class="ic" style="left:50px;top:701px;width:16px;height:10px" viewBox="0 0 16 10"><ellipse cx="8" cy="5" rx="8.1" ry="4.1" fill="#1e88e5"/><text x="8.2" y="7" font-family="Liberation Sans" font-style="italic" font-size="6.6" fill="#1a2f45" text-anchor="middle">php</text></svg><div class="t item" style="left:72px;top:699px">archive.php</div><svg class="ic" style="left:50px;top:723px;width:16px;height:10px" viewBox="0 0 16 10"><ellipse cx="8" cy="5" rx="8.1" ry="4.1" fill="#1e88e5"/><text x="8.2" y="7" font-family="Liberation Sans" font-style="italic" font-size="6.6" fill="#1a2f45" text-anchor="middle">php</text></svg><div class="t item" style="left:72px;top:721px">comments.php</div><svg class="ic" style="left:50px;top:745px;width:16px;height:10px" viewBox="0 0 16 10"><ellipse cx="8" cy="5" rx="8.1" ry="4.1" fill="#1e88e5"/><text x="8.2" y="7" font-family="Liberation Sans" font-style="italic" font-size="6.6" fill="#1a2f45" text-anchor="middle">php</text></svg><div class="t item" style="left:72px;top:743px">footer.php</div><svg class="ic" style="left:50px;top:767px;width:16px;height:10px" viewBox="0 0 16 10"><ellipse cx="8" cy="5" rx="8.1" ry="4.1" fill="#1e88e5"/><text x="8.2" y="7" font-family="Liberation Sans" font-style="italic" font-size="6.6" fill="#1a2f45" text-anchor="middle">php</text></svg><div class="t item" style="left:72px;top:765px">front-page.php</div><svg class="ic" style="left:50px;top:789px;width:16px;height:10px" viewBox="0 0 16 10"><ellipse cx="8" cy="5" rx="8.1" ry="4.1" fill="#1e88e5"/><text x="8.2" y="7" font-family="Liberation Sans" font-style="italic" font-size="6.6" fill="#1a2f45" text-anchor="middle">php</text></svg><div class="t item" style="left:72px;top:787px">functions.php</div><svg class="ic" style="left:50px;top:811px;width:16px;height:10px" viewBox="0 0 16 10"><ellipse cx="8" cy="5" rx="8.1" ry="4.1" fill="#1e88e5"/><text x="8.2" y="7" font-family="Liberation Sans" font-style="italic" font-size="6.6" fill="#1a2f45" text-anchor="middle">php</text></svg><div class="t item" style="left:72px;top:809px">header.php</div><svg class="ic" style="left:50px;top:833px;width:16px;height:10px" viewBox="0 0 16 10"><ellipse cx="8" cy="5" rx="8.1" ry="4.1" fill="#1e88e5"/><text x="8.2" y="7" font-family="Liberation Sans" font-style="italic" font-size="6.6" fill="#1a2f45" text-anchor="middle">php</text></svg><div class="t item" style="left:72px;top:831px">image.php</div><svg class="ic" style="left:50px;top:855px;width:16px;height:10px" viewBox="0 0 16 10"><ellipse cx="8" cy="5" rx="8.1" ry="4.1" fill="#1e88e5"/><text x="8.2" y="7" font-family="Liberation Sans" font-style="italic" font-size="6.6" fill="#1a2f45" text-anchor="middle">php</text></svg><div class="t item" style="left:72px;top:853px">index.php</div><svg class="ic" style="left:51px;top:876px;width:16px;height:12px" viewBox="0 0 16 12"><path d="M5.2 0.8H3.6v4.3L1.2 6l2.4.9v4.3h1.6M10.8 0.8h1.6v4.3l2.4.9-2.4.9v4.3h-1.6" fill="none" stroke="#fbc02d" stroke-width="1.3" stroke-linejoin="miter"/><circle cx="5.6" cy="8.5" r=".65" fill="#fbc02d"/><circle cx="8" cy="8.5" r=".65" fill="#fbc02d"/><circle cx="10.4" cy="8.5" r=".65" fill="#fbc02d"/></svg><div class="t item" style="left:72px;top:875px">manifest.json</div><svg class="ic" style="left:52px;top:897px;width:13px;height:14px" viewBox="0 0 13 14"><path d="M6.5 0.6l5.7 3.3v6.4l-5.7 3.3L.8 10.3V3.9z" fill="none" stroke="#8bc34a" stroke-width="1.1"/><path d="M4.6 4v5.2c0 1-.9 1.3-1.5.9" fill="none" stroke="#689f38" stroke-width="1.1"/><path d="M9.5 4.6c-.5-.5-2.4-.7-2.5.4-.1 1.3 2.7 1 2.6 2.4-.1 1.2-2 1.1-2.7.5" fill="none" stroke="#8bc34a" stroke-width="1.1"/></svg><div class="t item" style="left:72px;top:897px">package-lock.json</div><svg class="ic" style="left:52px;top:919px;width:13px;height:14px" viewBox="0 0 13 14"><path d="M6.5 0.6l5.7 3.3v6.4l-5.7 3.3L.8 10.3V3.9z" fill="none" stroke="#8bc34a" stroke-width="1.1"/><path d="M4.6 4v5.2c0 1-.9 1.3-1.5.9" fill="none" stroke="#689f38" stroke-width="1.1"/><path d="M9.5 4.6c-.5-.5-2.4-.7-2.5.4-.1 1.3 2.7 1 2.6 2.4-.1 1.2-2 1.1-2.7.5" fill="none" stroke="#8bc34a" stroke-width="1.1"/></svg><div class="t item" style="left:72px;top:919px">package.json</div><svg class="ic" style="left:50px;top:943px;width:16px;height:10px" viewBox="0 0 16 10"><ellipse cx="8" cy="5" rx="8.1" ry="4.1" fill="#1e88e5"/><text x="8.2" y="7" font-family="Liberation Sans" font-style="italic" font-size="6.6" fill="#1a2f45" text-anchor="middle">php</text></svg><div class="t item" style="left:72px;top:941px">page-get.php</div><svg class="ic" style="left:50px;top:965px;width:16px;height:10px" viewBox="0 0 16 10"><ellipse cx="8" cy="5" rx="8.1" ry="4.1" fill="#1e88e5"/><text x="8.2" y="7" font-family="Liberation Sans" font-style="italic" font-size="6.6" fill="#1a2f45" text-anchor="middle">php</text></svg><div class="t item" style="left:72px;top:963px">page-guestbook.php</div><svg class="ic" style="left:50px;top:987px;width:16px;height:10px" viewBox="0 0 16 10"><ellipse cx="8" cy="5" rx="8.1" ry="4.1" fill="#1e88e5"/><text x="8.2" y="7" font-family="Liberation Sans" font-style="italic" font-size="6.6" fill="#1a2f45" text-anchor="middle">php</text></svg><div class="t item" style="left:72px;top:985px">page-header-category....</div><svg class="ic" style="left:50px;top:1009px;width:16px;height:10px" viewBox="0 0 16 10"><ellipse cx="8" cy="5" rx="8.1" ry="4.1" fill="#1e88e5"/><text x="8.2" y="7" font-family="Liberation Sans" font-style="italic" font-size="6.6" fill="#1a2f45" text-anchor="middle">php</text></svg><div class="t item" style="left:72px;top:1007px">page-portfolio.php</div><svg class="ic" style="left:50px;top:1031px;width:16px;height:10px" viewBox="0 0 16 10"><ellipse cx="8" cy="5" rx="8.1" ry="4.1" fill="#1e88e5"/><text x="8.2" y="7" font-family="Liberation Sans" font-style="italic" font-size="6.6" fill="#1a2f45" text-anchor="middle">php</text></svg><div class="t item" style="left:72px;top:1029px">page-send-notification....</div><svg class="ic" style="left:50px;top:1053px;width:16px;height:10px" viewBox="0 0 16 10"><ellipse cx="8" cy="5" rx="8.1" ry="4.1" fill="#1e88e5"/><text x="8.2" y="7" font-family="Liberation Sans" font-style="italic" font-size="6.6" fill="#1a2f45" text-anchor="middle">php</text></svg><div class="t item" style="left:72px;top:1051px">page-tags.php</div><svg class="ic" style="left:50px;top:1075px;width:16px;height:10px" viewBox="0 0 16 10"><ellipse cx="8" cy="5" rx="8.1" ry="4.1" fill="#1e88e5"/><text x="8.2" y="7" font-family="Liberation Sans" font-style="italic" font-size="6.6" fill="#1a2f45" text-anchor="middle">php</text></svg><div class="t item" style="left:72px;top:1073px">page-twice-new-tab.php</div><svg class="ic" style="left:50px;top:1097px;width:16px;height:10px" viewBox="0 0 16 10"><ellipse cx="8" cy="5" rx="8.1" ry="4.1" fill="#1e88e5"/><text x="8.2" y="7" font-family="Liberation Sans" font-style="italic" font-size="6.6" fill="#1a2f45" text-anchor="middle">php</text></svg><div class="t item" style="left:72px;top:1095px">page-upload.php</div><svg class="ic" style="left:50px;top:1119px;width:16px;height:10px" viewBox="0 0 16 10"><ellipse cx="8" cy="5" rx="8.1" ry="4.1" fill="#1e88e5"/><text x="8.2" y="7" font-family="Liberation Sans" font-style="italic" font-size="6.6" fill="#1a2f45" text-anchor="middle">php</text></svg><div class="t item" style="left:72px;top:1117px">page-viewer.php</div><svg class="ic" style="left:50px;top:1141px;width:16px;height:10px" viewBox="0 0 16 10"><ellipse cx="8" cy="5" rx="8.1" ry="4.1" fill="#1e88e5"/><text x="8.2" y="7" font-family="Liberation Sans" font-style="italic" font-size="6.6" fill="#1a2f45" text-anchor="middle">php</text></svg><div class="t item" style="left:72px;top:1139px">page.php</div><svg class="ic" style="left:51px;top:1161px;width:14px;height:14px" viewBox="0 0 14 14"><circle cx="7" cy="7" r="7" fill="#42a5f5"/><rect x="6.2" y="5.6" width="1.6" height="5" fill="#21252b"/><circle cx="7" cy="3.8" r="0.95" fill="#21252b"/></svg><div class="t item" style="left:72px;top:1161px">README.md</div><svg class="ic" style="left:53px;top:1183px;width:11px;height:14px" viewBox="0 0 11 14"><path d="M0.5 0.5h6.3l3.7 3.7v9.3H.5z" fill="#26a69a"/><path d="M6.5 1.5v3h3z" fill="#21252b"/><circle cx="3" cy="5.6" r="1.2" fill="#21252b"/><path d="M1.6 11.6l3.4-3.4 1.6 1.4 2.8-3v5z" fill="#21252b"/></svg><div class="t item" style="left:72px;top:1183px">screenshot.jpg</div><svg class="ic" style="left:50px;top:1207px;width:16px;height:10px" viewBox="0 0 16 10"><ellipse cx="8" cy="5" rx="8.1" ry="4.1" fill="#1e88e5"/><text x="8.2" y="7" font-family="Liberation Sans" font-style="italic" font-size="6.6" fill="#1a2f45" text-anchor="middle">php</text></svg><div class="t item" style="left:72px;top:1205px">search.php</div><svg class="ic" style="left:50px;top:1229px;width:16px;height:10px" viewBox="0 0 16 10"><ellipse cx="8" cy="5" rx="8.1" ry="4.1" fill="#1e88e5"/><text x="8.2" y="7" font-family="Liberation Sans" font-style="italic" font-size="6.6" fill="#1a2f45" text-anchor="middle">php</text></svg><div class="t item" style="left:72px;top:1227px">single.php</div><svg class="ic" style="left:51px;top:1249px;width:14px;height:14px" viewBox="0 0 14 14"><path d="M2.6 0.8h11l-1.6 9.8L7 13.2 1.6 10.7 2.2 8.2h2.3l-.2 1.2L7 10.6l3-1.3.5-2.4H2.7l.4-2.2h7.8l.3-1.7H2.3z" fill="#42a5f5"/></svg><div class="t item" style="left:72px;top:1249px">style.css</div><svg class="ic" style="left:51px;top:1272px;width:16px;height:12px" viewBox="0 0 16 12"><path d="M5.2 0.8H3.6v4.3L1.2 6l2.4.9v4.3h1.6M10.8 0.8h1.6v4.3l2.4.9-2.4.9v4.3h-1.6" fill="none" stroke="#fbc02d" stroke-width="1.3" stroke-linejoin="miter"/><circle cx="5.6" cy="8.5" r=".65" fill="#fbc02d"/><circle cx="8" cy="8.5" r=".65" fill="#fbc02d"/><circle cx="10.4" cy="8.5" r=".65" fill="#fbc02d"/></svg><div class="t item" style="left:72px;top:1271px">tsconfig.json</div><svg class="ic" style="left:52px;top:1292px;width:14px;height:16px" viewBox="0 0 14 16"><path d="M7 0.5l6.3 3.6v7.4L7 15.2 0.7 11.5V4.1z" fill="#8ed6fb"/><path d="M7 3.6l3.6 2.1v4.2L7 12 3.4 9.9V5.7z" fill="#1c78c0"/><path d="M3.4 5.7L7 7.8l3.6-2.1M7 7.8V12" stroke="#8ed6fb" stroke-width="0.9" fill="none"/></svg><div class="t item" style="left:72px;top:1293px">webpack.config.js</div><div class="sticky" style="top:0;height:13px"></div><svg class="ic" style="left:25px;top:-2px;width:12px;height:8px" viewBox="0 0 12 8"><path d="M1 1.4l5 5 5-5" fill="none" stroke="#c5c5c5" stroke-width="1.05"/></svg><svg class="ic" style="left:43px;top:-4px;width:16px;height:14px" viewBox="0 0 16 14"><path d="M0 1.2C0 .7.4.3.9.3h4.3l1.3 1.3h6.6c.5 0 .9.4.9.9V4H2.2L0 10.8z" fill="#90a4ae"/><path d="M2.2 4.3H14.5L12.3 11H0z" fill="#90a4ae"/></svg><div class="t item" style="left:64px;top:-5px">marshall</div><div style="position:absolute;left:28px;top:13px;width:1px;height:1292px;background:#585d66"></div><div class="shadowtop"></div></div><div class="hdr" style="top:475px"></div><svg class="ic" style="left:4px;top:482px;width:12px;height:8px" viewBox="0 0 12 8"><path d="M1 1.4l5 5 5-5" fill="none" stroke="#d7dae0" stroke-width="1.05"/></svg><div class="t sechdr" style="left:20px;top:480px">VSC (WORKSPACE)</div><div class="hdr" style="top:1802px"></div><svg class="ic" style="left:6px;top:1807px;width:8px;height:12px" viewBox="0 0 8 12"><path d="M1.4 1l5 5-5 5" fill="none" stroke="#d7dae0" stroke-width="1.05"/></svg><div class="t sechdr" style="left:20px;top:1807px">OUTLINE</div><div class="hdr" style="top:1824px"></div><svg class="ic" style="left:6px;top:1829px;width:8px;height:12px" viewBox="0 0 8 12"><path d="M1.4 1l5 5-5 5" fill="none" stroke="#d7dae0" stroke-width="1.05"/></svg><div class="t sechdr" style="left:20px;top:1829px">TIMELINE</div><div class="hdr" style="top:1846px"></div><svg class="ic" style="left:6px;top:1851px;width:8px;height:12px" viewBox="0 0 8 12"><path d="M1.4 1l5 5-5 5" fill="none" stroke="#d7dae0" stroke-width="1.05"/></svg><div class="t sechdr" style="left:20px;top:1851px">NPM SCRIPTS</div></div>
<div id="editor"><div id="tabbar"></div><div class="tab active" style="left:0px;width:167px"></div><svg class="ic" style="left:11px;top:11px;width:14px;height:14px" viewBox="0 0 14 14"><rect x="0.5" y="0.5" width="13" height="13" fill="none" stroke="#0f6b9e" stroke-width="1"/><path d="M3.8 7.4h3.6M5.6 7.4v4.8" stroke="#0b8fd6" stroke-width="1.4" fill="none"/><path d="M11.2 7.7c-.4-.4-1.6-.6-2 .1-.5.9 2.1 1.3 1.8 2.6-.3 1-1.7.9-2.2.4" stroke="#0b8fd6" stroke-width="1.2" fill="none"/></svg><div class="t tabt" style="left:32px;top:11px;color:#d7dae0">MainContainer.d.ts</div><svg class="ic" style="left:146px;top:13px;width:10px;height:10px" viewBox="0 0 10 10"><path d="M0.5 0.5l9 9M9.5 0.5l-9 9" stroke="#d7dae0" stroke-width="1.2"/></svg><div class="tab" style="left:167px;width:122px"></div><svg class="ic" style="left:178px;top:11px;width:14px;height:14px" viewBox="0 0 14 14"><rect x="0.5" y="0.5" width="13" height="13" fill="none" stroke="#0f6b9e" stroke-width="1"/><path d="M3.8 7.4h3.6M5.6 7.4v4.8" stroke="#0b8fd6" stroke-width="1.4" fill="none"/><path d="M11.2 7.7c-.4-.4-1.6-.6-2 .1-.5.9 2.1 1.3 1.8 2.6-.3 1-1.7.9-2.2.4" stroke="#0b8fd6" stroke-width="1.2" fill="none"/></svg><div class="t tabt" style="left:199px;top:11px;color:#7f848e">Global.d.ts</div><div class="tab" style="left:289px;width:160px"></div><svg class="ic" style="left:300px;top:11px;width:14px;height:14px" viewBox="0 0 14 14"><rect x="0.5" y="0.5" width="13" height="13" fill="none" stroke="#0f6b9e" stroke-width="1"/><path d="M3.8 7.4h3.6M5.6 7.4v4.8" stroke="#0b8fd6" stroke-width="1.4" fill="none"/><path d="M11.2 7.7c-.4-.4-1.6-.6-2 .1-.5.9 2.1 1.3 1.8 2.6-.3 1-1.7.9-2.2.4" stroke="#0b8fd6" stroke-width="1.2" fill="none"/></svg><div class="t tabt" style="left:321px;top:11px;color:#7f848e">CommentList.d.ts</div><div class="tab" style="left:449px;width:216px"></div><svg class="ic" style="left:459px;top:13px;width:16px;height:10px" viewBox="0 0 16 10"><ellipse cx="8" cy="5" rx="8.1" ry="4.1" fill="#1e88e5"/><text x="8.2" y="7" font-family="Liberation Sans" font-style="italic" font-size="6.6" fill="#1a2f45" text-anchor="middle">php</text></svg><div class="t tabt" style="left:481px;top:11px;color:#7f848e">page-header-category.php</div><div class="tab" style="left:665px;width:60px"></div><svg class="ic" style="left:675px;top:13px;width:16px;height:10px" viewBox="0 0 16 10"><ellipse cx="8" cy="5" rx="8.1" ry="4.1" fill="#1e88e5"/><text x="8.2" y="7" font-family="Liberation Sans" font-style="italic" font-size="6.6" fill="#1a2f45" text-anchor="middle">php</text></svg><div class="t tabt" style="left:697px;top:11px;color:#7f848e">pa</div><div style="position:absolute;left:708px;top:0;width:108px;height:35px;background:#21252b"></div><svg class="ic" style="left:719px;top:10px;width:16px;height:16px" viewBox="0 0 16 16"><circle cx="3.5" cy="3" r="1.9" fill="none" stroke="#d7dae0" stroke-width="1.1"/><circle cx="12.5" cy="13" r="1.9" fill="none" stroke="#d7dae0" stroke-width="1.1"/><path d="M3.5 5v8.5h4.5M6 11.5l2 2-2 2M12.5 11V2.5H8M10 4.5l-2-2 2-2" fill="none" stroke="#d7dae0" stroke-width="1.1"/></svg><svg class="ic" style="left:751px;top:10px;width:16px;height:16px" viewBox="0 0 16 16"><rect x="1.5" y="1.5" width="13" height="13" rx="1" fill="none" stroke="#d7dae0" stroke-width="1.1"/><path d="M8.5 1.5v13" stroke="#d7dae0" stroke-width="1.1"/></svg><svg class="ic" style="left:782px;top:10px;width:16px;height:16px" viewBox="0 0 16 16"><circle cx="3" cy="8" r="1.1" fill="#d7dae0"/><circle cx="8" cy="8" r="1.1" fill="#d7dae0"/><circle cx="13" cy="8" r="1.1" fill="#d7dae0"/></svg><svg class="ic" style="left:16px;top:38px;width:16px;height:16px" viewBox="0 0 16 16"><circle cx="8" cy="8" r="6.2" fill="none" stroke="#a0acb8" stroke-width="1.4"/><circle cx="8" cy="8" r="3.4" fill="#a0acb8"/></svg><div class="t bc" style="left:38px;top:39px">themes</div><div class="t bc" style="left:96px;top:39px">marshall</div><div class="t bc" style="left:160px;top:39px">src</div><div class="t bc" style="left:192px;top:39px">ts</div><div class="t bc" style="left:219px;top:39px">@types</div><div class="t bc" style="left:300px;top:39px">MainContainer.d.ts</div><div class="t bc" style="left:424px;top:39px">...</div><svg class="ic" style="left:83px;top:41px;width:8px;height:14px" viewBox="0 0 8 14"><path d="M1 2.5l5 4.5-5 4.5" fill="none" stroke="#9da5b4" stroke-width="1.1"/></svg><svg class="ic" style="left:148px;top:41px;width:8px;height:14px" viewBox="0 0 8 14"><path d="M1 2.5l5 4.5-5 4.5" fill="none" stroke="#9da5b4" stroke-width="1.1"/></svg><svg class="ic" style="left:180px;top:41px;width:8px;height:14px" viewBox="0 0 8 14"><path d="M1 2.5l5 4.5-5 4.5" fill="none" stroke="#9da5b4" stroke-width="1.1"/></svg><svg class="ic" style="left:209px;top:41px;width:8px;height:14px" viewBox="0 0 8 14"><path d="M1 2.5l5 4.5-5 4.5" fill="none" stroke="#9da5b4" stroke-width="1.1"/></svg><svg class="ic" style="left:266px;top:41px;width:8px;height:14px" viewBox="0 0 8 14"><path d="M1 2.5l5 4.5-5 4.5" fill="none" stroke="#9da5b4" stroke-width="1.1"/></svg><svg class="ic" style="left:413px;top:41px;width:8px;height:14px" viewBox="0 0 8 14"><path d="M1 2.5l5 4.5-5 4.5" fill="none" stroke="#9da5b4" stroke-width="1.1"/></svg><svg class="ic" style="left:278px;top:42px;width:14px;height:14px" viewBox="0 0 14 14"><rect x="0.5" y="0.5" width="13" height="13" fill="none" stroke="#0f6b9e" stroke-width="1"/><path d="M3.8 7.4h3.6M5.6 7.4v4.8" stroke="#0b8fd6" stroke-width="1.4" fill="none"/><path d="M11.2 7.7c-.4-.4-1.6-.6-2 .1-.5.9 2.1 1.3 1.8 2.6-.3 1-1.7.9-2.2.4" stroke="#0b8fd6" stroke-width="1.2" fill="none"/></svg><div style="position:absolute;left:69px;top:1551px;width:747px;height:18px;background:#2c313c"></div><div class="guide" style="left:68px;top:75px;height:54px"></div><div class="guide" style="left:68px;top:183px;height:72px"></div><div class="guide" style="left:68px;top:309px;height:18px"></div><div class="guide" style="left:68px;top:381px;height:18px"></div><div class="guide" style="left:68px;top:453px;height:18px"></div><div class="guide" style="left:68px;top:525px;height:126px"></div><div class="guide" style="left:68px;top:705px;height:72px"></div><div class="guide" style="left:68px;top:831px;height:180px"></div><div class="guide" style="left:68px;top:1065px;height:324px"></div><div class="guide" style="left:68px;top:1443px;height:90px"></div><div class="guide" style="left:100px;top:579px;height:36px"></div><div class="guide" style="left:100px;top:957px;height:36px"></div><div class="guide" style="left:100px;top:1119px;height:36px"></div><div class="guide" style="left:100px;top:1263px;height:36px"></div><div class="ln" style="top:57px">1</div><div class="ln" style="top:75px">2</div><div class="ln" style="top:93px">3</div><div class="ln" style="top:111px">4</div><div class="ln" style="top:129px">5</div><div class="ln" style="top:147px">6</div><div class="ln" style="top:165px">7</div><div class="ln" style="top:183px">8</div><div class="ln" style="top:201px">9</div><div class="ln" style="top:219px">10</div><div class="ln" style="top:237px">11</div><div class="ln" style="top:255px">12</div><div class="ln" style="top:273px">13</div><div class="ln" style="top:291px">14</div><div class="ln" style="top:309px">15</div><div class="ln" style="top:327px">16</div><div class="ln" style="top:345px">17</div><div class="ln" style="top:363px">18</div><div class="ln" style="top:381px">19</div><div class="ln" style="top:399px">20</div><div class="ln" style="top:417px">21</div><div class="ln" style="top:435px">22</div><div class="ln" style="top:453px">23</div><div class="ln" style="top:471px">24</div><div class="ln" style="top:489px">25</div><div class="ln" style="top:507px">26</div><div class="ln" style="top:525px">27</div><div class="ln" style="top:543px">28</div><div class="ln" style="top:561px">29</div><div class="ln" style="top:579px">30</div><div class="ln" style="top:597px">31</div><div class="ln" style="top:615px">32</div><div class="ln" style="top:633px">33</div><div class="ln" style="top:651px">34</div><div class="ln" style="top:669px">35</div><div class="ln" style="top:687px">36</div><div class="ln" style="top:705px">37</div><div class="ln" style="top:723px">38</div><div class="ln" style="top:741px">39</div><div class="ln" style="top:759px">40</div><div class="ln" style="top:777px">41</div><div class="ln" style="top:795px">42</div><div class="ln" style="top:813px">43</div><div class="ln" style="top:831px">44</div><div class="ln" style="top:849px">45</div><div class="ln" style="top:867px">46</div><div class="ln" style="top:885px">47</div><div class="ln" style="top:903px">48</div><div class="ln" style="top:921px">49</div><div class="ln" style="top:939px">50</div><div class="ln" style="top:957px">51</div><div class="ln" style="top:975px">52</div><div class="ln" style="top:993px">53</div><div class="ln" style="top:1011px">54</div><div class="ln" style="top:1029px">55</div><div class="ln" style="top:1047px">56</div><div class="ln" style="top:1065px">57</div><div class="ln" style="top:1083px">58</div><div class="ln" style="top:1101px">59</div><div class="ln" style="top:1119px">60</div><div class="ln" style="top:1137px">61</div><div class="ln" style="top:1155px">62</div><div class="ln" style="top:1173px">63</div><div class="ln" style="top:1191px">64</div><div class="ln" style="top:1209px">65</div><div class="ln" style="top:1227px">66</div><div class="ln" style="top:1245px">67</div><div class="ln" style="top:1263px">68</div><div class="ln" style="top:1281px">69</div><div class="ln" style="top:1299px">70</div><div class="ln" style="top:1317px">71</div><div class="ln" style="top:1335px">72</div><div class="ln" style="top:1353px">73</div><div class="ln" style="top:1371px">74</div><div class="ln" style="top:1389px">75</div><div class="ln" style="top:1407px">76</div><div class="ln" style="top:1425px">77</div><div class="ln" style="top:1443px">78</div><div class="ln" style="top:1461px">79</div><div class="ln" style="top:1479px">80</div><div class="ln" style="top:1497px">81</div><div class="ln" style="top:1515px">82</div><div class="ln" style="top:1533px">83</div><div class="ln cur" style="top:1551px">84</div><div class="cl" style="top:57px"><span class="k">interface</span> <span class="y">articleBasicJson</span> <span class="b1">{</span></div><div class="cl" style="top:75px">    <span class="r">title</span><span class="p">: </span><span class="y">string</span><span class="p">;</span></div><div class="cl" style="top:93px">    <span class="r">uri</span><span class="p">: </span><span class="y">string</span><span class="p">;</span></div><div class="cl" style="top:111px">    <span class="r">thumbnail</span><span class="p">: </span><span class="y">string</span><span class="p">;</span></div><div class="cl" style="top:129px"><span class="b1">}</span></div><div class="cl" style="top:165px"><span class="k">interface</span> <span class="y">articleJson</span> <span class="k">extends</span> <span class="y">articleBasicJson</span> <span class="b1">{</span></div><div class="cl" style="top:183px">    <span class="r">date</span><span class="p">: </span><span class="y">string</span><span class="p">;</span></div><div class="cl" style="top:201px">    <span class="r">dateFormat</span><span class="p">: </span><span class="y">string</span><span class="p">;</span></div><div class="cl" style="top:219px">    <span class="r">desc</span><span class="p">: </span><span class="y">string</span><span class="p">;</span></div><div class="cl" style="top:237px">    <span class="r">isNew</span><span class="p">: </span><span class="y">string</span><span class="p">;</span></div><div class="cl" style="top:255px"><span class="b1">}</span></div><div class="cl" style="top:291px"><span class="k">interface</span> <span class="y">articleAltJson</span> <span class="k">extends</span> <span class="y">articleBasicJson</span> <span class="b1">{</span></div><div class="cl" style="top:309px">    <span class="r">newTab</span><span class="k">?</span><span class="p">: </span><span class="y">boolean</span><span class="p">;</span></div><div class="cl" style="top:327px"><span class="b1">}</span></div><div class="cl" style="top:363px"><span class="k">interface</span> <span class="y">postAdjacentArticle</span> <span class="k">extends</span> <span class="y">articleBasicJson</span> <span class="b1">{</span></div><div class="cl" style="top:381px">    <span class="r">thumbnailSet</span><span class="p">: </span><span class="y">string</span><span class="p">;</span></div><div class="cl" style="top:399px"><span class="b1">}</span></div><div class="cl" style="top:435px"><span class="k">interface</span> <span class="y">postRelatedArticle</span> <span class="k">extends</span> <span class="y">articleBasicJson</span> <span class="b1">{</span></div><div class="cl" style="top:453px">    <span class="r">id</span><span class="p">: </span><span class="y">number</span><span class="p">;</span></div><div class="cl" style="top:471px"><span class="b1">}</span></div><div class="cl" style="top:507px"><span class="k">interface</span> <span class="y">blogJson</span> <span class="b1">{</span></div><div class="cl" style="top:525px">    <span class="r">currentBlogVersion</span><span class="p">: </span><span class="y">string</span><span class="p">;</span></div><div class="cl" style="top:543px">    <span class="r">bodyClass</span><span class="p">: </span><span class="y">string</span><span class="p">;</span></div><div class="cl" style="top:561px">    <span class="r">thumbnail</span><span class="p">: </span><span class="b2">{</span></div><div class="cl" style="top:579px">        <span class="r">src</span><span class="p">: </span><span class="y">string</span><span class="p">;</span></div><div class="cl" style="top:597px">        <span class="r">srcset</span><span class="p">: </span><span class="y">string</span><span class="p">;</span></div><div class="cl" style="top:615px">    <span class="b2">}</span><span class="p">;</span></div><div class="cl" style="top:633px">    <span class="r">title</span><span class="p">: </span><span class="y">string</span><span class="p">;</span></div><div class="cl" style="top:651px"><span class="b1">}</span></div><div class="cl" style="top:687px"><span class="k">interface</span> <span class="y">homeJson</span> <span class="k">extends</span> <span class="y">blogJson</span> <span class="b1">{</span></div><div class="cl" style="top:705px">    <span class="r">type</span><span class="p">: </span><span class="g">&quot;home&quot;</span><span class="p">;</span></div><div class="cl" style="top:723px">    <span class="r">categories</span><span class="p">: </span><span class="b2">[</span><span class="y">articleAltJson</span><span class="b2">]</span><span class="p">;</span></div><div class="cl" style="top:741px">    <span class="r">pages</span><span class="p">: </span><span class="b2">[</span><span class="y">articleAltJson</span><span class="b2">]</span><span class="p">;</span></div><div class="cl" style="top:759px">    <span class="r">list</span><span class="p">: </span><span class="y">articleJson</span><span class="b2">[]</span><span class="p">;</span></div><div class="cl" style="top:777px"><span class="b1">}</span></div><div class="cl" style="top:813px"><span class="k">interface</span> <span class="y">archiveJson</span> <span class="k">extends</span> <span class="y">blogJson</span> <span class="b1">{</span></div><div class="cl" style="top:831px">    <span class="r">type</span><span class="p">: </span><span class="g">&quot;category&quot;</span><span class="p">;</span></div><div class="cl" style="top:849px">    <span class="r">categoryStyle</span><span class="p">: </span><span class="y">string</span><span class="p">;</span></div><div class="cl" style="top:867px">    <span class="r">desc</span><span class="p">: </span><span class="y">string</span><span class="p">;</span></div><div class="cl" style="top:885px">    <span class="r">query</span><span class="k">?</span><span class="p">: </span><span class="y">string</span><span class="p">;</span></div><div class="cl" style="top:903px">    <span class="r">slug</span><span class="p">: </span><span class="y">string</span><span class="p">;</span></div><div class="cl" style="top:921px">    <span class="r">list</span><span class="p">: </span><span class="y">articleJson</span><span class="b2">[]</span><span class="p">;</span></div><div class="cl" style="top:939px">    <span class="r">paging</span><span class="p">: </span><span class="b2">{</span></div><div class="cl" style="top:957px">        <span class="r">max</span><span class="p">: </span><span class="y">number</span><span class="p">;</span></div><div class="cl" style="top:975px">        <span class="r">currentIndex</span><span class="p">: </span><span class="y">number</span><span class="p">;</span></div><div class="cl" style="top:993px">    <span class="b2">}</span><span class="p">;</span></div><div class="cl" style="top:1011px"><span class="b1">}</span></div><div class="cl" style="top:1047px"><span class="k">interface</span> <span class="y">postJson</span> <span class="k">extends</span> <span class="y">blogJson</span> <span class="b1">{</span></div><div class="cl" style="top:1065px">    <span class="r">type</span><span class="p">: </span><span class="g">&quot;article&quot;</span><span class="p">;</span></div><div class="cl" style="top:1083px">    <span class="r">isManager</span><span class="k">?</span><span class="p">: </span><span class="y">boolean</span><span class="p">;</span></div><div class="cl" style="top:1101px">    <span class="r">date</span><span class="p">: </span><span class="b2">{</span></div><div class="cl" style="top:1119px">        <span class="r">posted</span><span class="p">: </span><span class="y">string</span><span class="p">;</span></div><div class="cl" style="top:1137px">        <span class="r">modified</span><span class="p">: </span><span class="y">string</span><span class="p">;</span></div><div class="cl" style="top:1155px">    <span class="b2">}</span><span class="p">;</span></div><div class="cl" style="top:1173px">    <span class="r">id</span><span class="p">: </span><span class="y">number</span><span class="p">;</span></div><div class="cl" style="top:1191px">    <span class="r">desc</span><span class="p">: </span><span class="y">string</span><span class="p">;</span></div><div class="cl" style="top:1209px">    <span class="r">body</span><span class="p">: </span><span class="y">string</span><span class="p">;</span></div><div class="cl" style="top:1227px">    <span class="r">commentLength</span><span class="p">: </span><span class="y">number</span><span class="p">;</span></div><div class="cl" style="top:1245px">    <span class="r">category</span><span class="p">: </span><span class="b2">{</span></div><div class="cl" style="top:1263px">        <span class="r">name</span><span class="p">: </span><span class="y">string</span><span class="p">;</span></div><div class="cl" style="top:1281px">        <span class="r">link</span><span class="p">: </span><span class="y">string</span><span class="p">;</span></div><div class="cl" style="top:1299px">    <span class="b2">}</span><span class="p">;</span></div><div class="cl" style="top:1317px">    <span class="r">tags</span><span class="p">: </span><span class="y">string</span><span class="b2">[]</span><span class="p">;</span></div><div class="cl" style="top:1335px">    <span class="r">prevPost</span><span class="k">?</span><span class="p">: </span><span class="y">postAdjacentArticle</span><span class="p">;</span></div><div class="cl" style="top:1353px">    <span class="r">nextPost</span><span class="k">?</span><span class="p">: </span><span class="y">postAdjacentArticle</span><span class="p">;</span></div><div class="cl" style="top:1371px">    <span class="r">relatedArticles</span><span class="p">: </span><span class="y">postRelatedArticle</span><span class="b2">[]</span><span class="p">;</span></div><div class="cl" style="top:1389px"><span class="b1">}</span></div><div class="cl" style="top:1425px"><span class="k">interface</span> <span class="y">pageJson</span> <span class="k">extends</span> <span class="y">blogJson</span> <span class="b1">{</span></div><div class="cl" style="top:1443px">    <span class="r">type</span><span class="p">: </span><span class="y">string</span><span class="p">;</span></div><div class="cl" style="top:1461px">    <span class="r">body</span><span class="k">?</span><span class="p">: </span><span class="y">string</span><span class="p">;</span></div><div class="cl" style="top:1479px">    <span class="r">isManager</span><span class="k">?</span><span class="p">: </span><span class="y">boolean</span><span class="p">;</span></div><div class="cl" style="top:1497px">    <span class="r">id</span><span class="p">: </span><span class="y">number</span><span class="p">;</span></div><div class="cl" style="top:1515px">    <span class="r">hasComments</span><span class="p">: </span><span class="y">boolean</span><span class="p">;</span></div><div class="cl" style="top:1533px"><span class="b1">}</span></div><div style="position:absolute;left:68px;top:1557px;width:2px;height:8px;background:#528bff"></div><div style="position:absolute;left:802px;top:57px;width:1px;height:1811px;background:#3b3f46"></div><div style="position:absolute;left:802px;top:57px;width:14px;height:1px;background:#3b3f46"></div><div style="position:absolute;left:803px;top:1550px;width:13px;height:3px;background:#4d7fe6"></div></div>
<div id="status"><div style="position:absolute;left:0;top:0;width:34px;height:22px;background:#4d78cc"></div><svg class="ic" style="left:11px;top:4px;width:14px;height:14px" viewBox="0 0 14 14"><path d="M1.5 12.5l4.5-4.5-3-3M12.5 1.5L8 6l3 3" fill="none" stroke="#fff" stroke-width="1.2"/></svg><svg class="ic" style="left:42px;top:3px;width:16px;height:16px" viewBox="0 0 16 16"><circle cx="4.5" cy="3.5" r="1.8" fill="none" stroke="#9da5b4" stroke-width="1.1"/><circle cx="11.5" cy="6.5" r="1.8" fill="none" stroke="#9da5b4" stroke-width="1.1"/><circle cx="4.5" cy="13" r="1.8" fill="none" stroke="#9da5b4" stroke-width="1.1"/><path d="M4.5 5.3v5.9M4.5 10.5c0-2 1.5-2.2 4-2.5 2.5-.3 3-.8 3-1.7" fill="none" stroke="#9da5b4" stroke-width="1.1"/></svg><div class="t stt" style="left:59px;top:5px">master</div><svg class="ic" style="left:110px;top:3px;width:16px;height:16px" viewBox="0 0 16 16"><path d="M2.5 7.5a5.5 5.5 0 0 1 10-2.5M13.5 8.5a5.5 5.5 0 0 1-10 2.5" fill="none" stroke="#9da5b4" stroke-width="1.1"/><path d="M12.8 2v3.5H9.3M3.2 14v-3.5h3.5" fill="none" stroke="#9da5b4" stroke-width="1.1"/></svg><svg class="ic" style="left:141px;top:4px;width:14px;height:14px" viewBox="0 0 14 14"><circle cx="7" cy="7" r="5.8" fill="none" stroke="#9da5b4" stroke-width="1.1"/><path d="M4.5 4.5l5 5M9.5 4.5l-5 5" stroke="#9da5b4" stroke-width="1.1"/></svg><div class="t stt" style="left:158px;top:5px">0</div><svg class="ic" style="left:168px;top:3px;width:14px;height:14px" viewBox="0 0 14 14"><path d="M7 1.5L13 12.5H1z" fill="none" stroke="#9da5b4" stroke-width="1.1" stroke-linejoin="round"/><path d="M7 5.5v4M7 10.5v1" stroke="#9da5b4" stroke-width="1.1"/></svg><div class="t stt" style="left:185px;top:5px">0</div><svg class="ic" style="left:208px;top:4px;width:14px;height:14px" viewBox="0 0 14 14"><circle cx="7" cy="7" r="5.8" fill="none" stroke="#9da5b4" stroke-width="1.1"/><ellipse cx="7" cy="7" rx="2.6" ry="5.8" fill="none" stroke="#9da5b4" stroke-width="1"/><path d="M1.2 7h11.6M2 4h10M2 10h10" stroke="#9da5b4" stroke-width="0.9"/></svg><div class="t stt" style="left:465px;top:5px">Ln 84, Col 1</div><div class="t stt" style="left:543px;top:5px">Spaces: 4</div><div class="t stt" style="left:607px;top:5px">UTF-8</div><div class="t stt" style="left:655px;top:5px">CRLF</div><div class="t stt" style="left:697px;top:5px">TypeScript</div><div class="t stt" style="left:785px;top:5px">Go Live</div><div class="t stt" style="left:840px;top:5px">4.1.2</div><div class="t stt" style="left:899px;top:5px">ESLint</div><div class="t stt" style="left:946px;top:5px">Prettier:</div><svg class="ic" style="left:769px;top:3px;width:14px;height:16px" viewBox="0 0 14 16"><path d="M3.5 11a5 5 0 1 1 7 0M5.3 9.2a2.5 2.5 0 1 1 3.4 0" fill="none" stroke="#9da5b4" stroke-width="1.1"/><circle cx="7" cy="7.4" r="1" fill="#9da5b4"/><path d="M7 8.5v6" stroke="#9da5b4" stroke-width="1.2"/></svg><svg class="ic" style="left:880px;top:5px;width:16px;height:12px" viewBox="0 0 16 12"><path d="M1 6l3 3.5L10 1.5M6.5 8.5l1 1L14 1.5" fill="none" stroke="#9da5b4" stroke-width="1.1"/></svg><svg class="ic" style="left:991px;top:4px;width:14px;height:12px" viewBox="0 0 14 12"><path d="M1.5 6l3.5 4L12.5 1.5" fill="none" stroke="#9da5b4" stroke-width="1.1"/></svg><svg class="ic" style="left:1020px;top:3px;width:16px;height:16px" viewBox="0 0 16 16"><path d="M8 2.5h6.5v5.5h-2.5" fill="none" stroke="#9da5b4" stroke-width="1.1"/><circle cx="6" cy="7.5" r="2.6" fill="none" stroke="#9da5b4" stroke-width="1.1"/><path d="M1.5 15c.5-2.5 2.2-4 4.5-4s4 1.5 4.5 4M10.5 6l1.5 1.5 2-2.5" fill="none" stroke="#9da5b4" stroke-width="1.1"/></svg><svg class="ic" style="left:1050px;top:3px;width:16px;height:16px" viewBox="0 0 16 16"><path d="M3.5 12.5V7a4.5 4.5 0 0 1 9 0v5.5M2.5 12.5h11M6.5 14.5h3" fill="none" stroke="#9da5b4" stroke-width="1.1"/></svg></div>
</body></html>
